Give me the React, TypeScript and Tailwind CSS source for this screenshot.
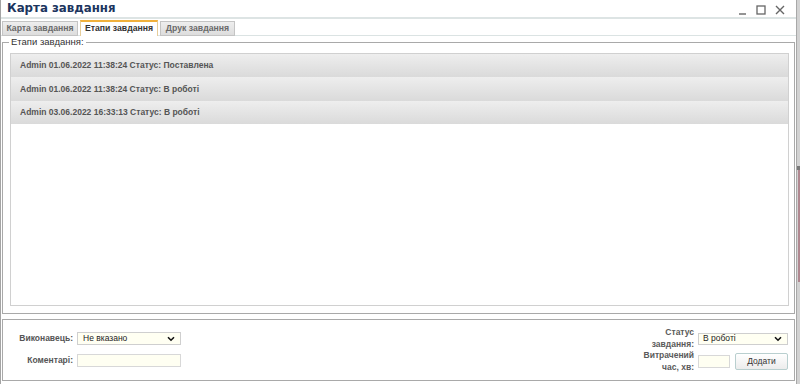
import React from "react";

const rows = [
  "Admin 01.06.2022 11:38:24 Статус: Поставлена",
  "Admin 01.06.2022 11:38:24 Статус: В роботі",
  "Admin 03.06.2022 16:33:13 Статус: В роботі",
];

function Chevron() {
  return (
    <svg width="8" height="6" viewBox="0 0 8 6" className="shrink-0">
      <path d="M1 1.2 L4 4.2 L7 1.2" fill="none" stroke="#111" strokeWidth="1.6" />
    </svg>
  );
}

export default function App() {
  return (
    <div className="w-[800px] h-[384px] bg-white flex overflow-hidden font-['Liberation_Sans',Arial,sans-serif]">
      <div className="w-[796px] h-full flex flex-col border-l border-l-[#a4a4a4] shrink-0">
        {/* Title bar */}
        <div className="h-[17px] flex items-center justify-between pl-[6px] pr-[11px] shrink-0">
          <span className="font-['DejaVu_Sans',sans-serif] font-bold text-[11.8px] text-[#1c355e] leading-none">
            Карта завдання
          </span>
          <div className="flex items-center gap-[9px] mt-[2px]">
            <svg width="9" height="10" viewBox="0 0 9 10">
              <path d="M1 9 H8" stroke="#666" strokeWidth="1.4" />
            </svg>
            <svg width="10" height="10" viewBox="0 0 10 10">
              <rect x="1" y="1" width="8" height="8" fill="none" stroke="#666" strokeWidth="1.3" />
            </svg>
            <svg width="10" height="10" viewBox="0 0 10 10">
              <path d="M1 1 L9 9 M9 1 L1 9" stroke="#666" strokeWidth="1.4" />
            </svg>
          </div>
        </div>
        <div className="h-[2px] bg-[#dde4e4] shrink-0" />
        {/* Tabs */}
        <div className="h-[16px] mt-[1px] flex items-end pl-[1px] border-b border-b-[#dbe3e3] shrink-0">
          <div className="h-[15px] w-[76px] mb-[-1px] flex items-center justify-center border border-[#c4c4c4] bg-gradient-to-b from-[#eeeeee] to-[#dddddd] text-[8.7px] font-bold text-[#6a6a6a]">
            Карта завдання
          </div>
          <div className="h-[16px] w-[78px] ml-[2px] mb-[-1px] flex items-center justify-center border-x border-x-[#e6cd9a] border-t-2 border-t-[#f1b13c] bg-white text-[8.7px] font-bold text-[#333]">
            Етапи завдання
          </div>
          <div className="h-[15px] w-[75px] ml-[2px] mb-[-1px] flex items-center justify-center border border-[#c4c4c4] bg-gradient-to-b from-[#eeeeee] to-[#dddddd] text-[8.7px] font-bold text-[#6a6a6a]">
            Друк завдання
          </div>
        </div>
        {/* Fieldset */}
        <div className="relative ml-[1px] mt-[6px] w-[793px] h-[272px] border border-[#a9a9a9] pt-[10px] pl-[7px] pr-[5px] pb-[7px] shrink-0">
          <span className="absolute left-[6px] top-[-7px] bg-white px-[2px] text-[9.5px] leading-[12px] text-[#333]">
            Етапи завдання:
          </span>
          <div className="w-full h-full border border-[#d0d0d0] bg-white flex flex-col">
            {rows.map((r, i) => (
              <div
                key={i}
                className={`${i === 1 ? "h-[24px]" : "h-[23px]"} flex items-center pl-[9px] bg-gradient-to-b from-[#eeeeee] to-[#dadada] text-[8.5px] font-bold text-[#555]`}
              >
                {r}
              </div>
            ))}
          </div>
        </div>
        {/* Bottom form panel */}
        <div className="ml-[1px] mt-[5px] w-[793px] h-[62px] border border-[#a9a9a9] flex justify-between shrink-0">
          <div className="pt-[12px] pl-[1px] flex flex-col gap-[9px]">
            <div className="flex items-center h-[13px]">
              <span className="w-[69px] text-right text-[8.5px] font-bold text-[#555]">Виконавець:</span>
              <div className="ml-[4px] w-[104px] h-[13px] border border-[#cfcfcf] bg-[#fffff2] flex items-center justify-between pl-[5px] pr-[5px]">
                <span className="text-[8.5px] text-[#222]">Не вказано</span>
                <Chevron />
              </div>
            </div>
            <div className="flex items-center h-[13px]">
              <span className="w-[69px] text-right text-[8.5px] font-bold text-[#555]">Коментарі:</span>
              <div className="ml-[4px] w-[104px] h-[13px] border border-[#d8d8d8] bg-[#fffff2]" />
            </div>
          </div>
          <div className="pt-[7px] pr-[6px] flex flex-col">
            <div className="flex items-center justify-end h-[23px]">
              <span className="block text-right text-[8.5px] leading-[11.5px] font-bold text-[#5a5a5a]">
                Статус
                <br />
                завдання:
              </span>
              <div className="ml-[4px] w-[90px] h-[12px] border border-[#cfcfcf] bg-[#fffff2] flex items-center justify-between pl-[4px] pr-[5px]">
                <span className="text-[8.5px] text-[#222]">В роботі</span>
                <Chevron />
              </div>
            </div>
            <div className="flex items-center justify-end h-[23px]">
              <span className="block text-right text-[8.5px] leading-[11.5px] font-bold text-[#5a5a5a]">
                Витрачений
                <br />
                час, хв:
              </span>
              <div className="ml-[4px] w-[32px] h-[13px] border border-[#d8d8d8] bg-[#fffff2]" />
              <div className="ml-[5px] w-[53px] h-[17px] border border-[#b9cfcf] rounded-[2px] bg-gradient-to-b from-white to-[#ececec] flex items-center justify-center text-[8.5px] text-[#333]">
                Додати
              </div>
            </div>
          </div>
        </div>
      </div>
      {/* Right page strip */}
      <div className="w-[4px] h-full border-l border-l-[#a8a8a8] bg-[#d2d2d2] flex flex-col">
        <div className="h-[166px]" />
        <div className="h-[4px] bg-[#7a7a7a]" />
        <div className="h-[112px] ml-[1px] w-[2px] bg-[#b08890]" />
      </div>
    </div>
  );
}
